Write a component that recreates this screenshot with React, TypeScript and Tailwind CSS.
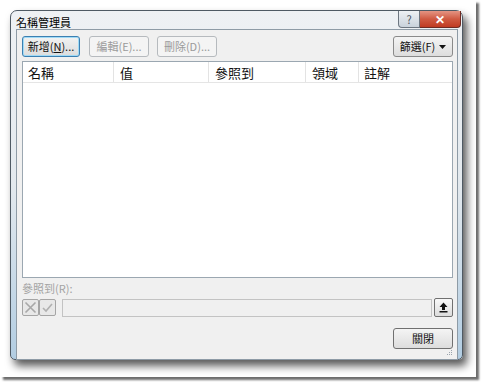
import React from "react";

const font = { fontFamily: '"Noto Sans CJK TC", "Noto Sans", sans-serif' };

function Btn({ children, w, disabled, focused }: { children: React.ReactNode; w: string; disabled?: boolean; focused?: boolean }) {
  let cls = "";
  if (disabled) cls = "border-[#b6babe] bg-[#f4f4f4] text-[#9a9a9a]";
  else if (focused) cls = "border-[#3c7fb1] bg-gradient-to-b from-[#f2f2f2] to-[#dcdcdc] text-[#111] shadow-[inset_0_0_0_1px_#9fdaf6]";
  else cls = "border-[#707070] bg-gradient-to-b from-[#f4f4f4] to-[#dddddd] text-[#111]";
  return (
    <div className={`${w} h-[21px] flex items-center justify-center rounded-[3px] border text-[11px] leading-none ${cls}`}>
      {children}
    </div>
  );
}

export default function App() {
  return (
    <div className="w-[484px] h-[382px] bg-white" style={font}>
      <div className="w-[476px] h-[377px] bg-white shadow-[3px_3px_2px_rgba(60,60,60,0.75)] pl-[10px] pt-[10px]">
        <div className="w-[453px] h-[350px] rounded-t-[7px] rounded-b-[5px] border border-[#4f5a64] bg-gradient-to-b from-[#eef1f4] via-[#e3e9ee] to-[#b2cde2] shadow-[4px_6px_8px_rgba(0,0,0,0.65)] flex flex-col">
          {/* title bar */}
          <div className="h-[22px] flex items-start justify-between pl-[5px] pr-[1px]">
            <div className="pt-[4px] text-[11px] leading-[14px] text-black">名稱管理員</div>
            <div className="flex">
              <div className="w-[22px] h-[17px] rounded-bl-[4px] border border-t-0 border-[#6d7680] bg-gradient-to-b from-[#eef1f4] to-[#c9d2db] flex items-center justify-center text-[11px] text-[#4a545e] leading-none">?</div>
              <div className="w-[41px] h-[17px] rounded-br-[4px] border border-l-0 border-t-0 border-[#6e2a22] bg-gradient-to-b from-[#e49483] via-[#cf5a42] to-[#c03a22] flex items-center justify-center text-white text-[12px] font-bold leading-none">✕</div>
            </div>
          </div>
          {/* client */}
          <div className="ml-[5px] mr-[4px] mb-[4px] flex-1 border border-[#8e9ba6] bg-[#f0f0f0] flex flex-col pl-[5px] pr-[4px] pt-[6px]">
            <div className="flex items-center">
              <Btn w="w-[58px]" focused>新增(<span className="underline">N</span>)...</Btn>
              <div className="w-[9px]" />
              <Btn w="w-[60px]" disabled>編輯(E)...</Btn>
              <div className="w-[8px]" />
              <Btn w="w-[60px]" disabled>刪除(D)...</Btn>
              <div className="flex-1" />
              <div className="w-[60px] h-[21px] flex items-center justify-center gap-[4px] rounded-[3px] border border-[#8a8a8a] bg-gradient-to-b from-[#f4f4f4] to-[#dddddd] text-[11px] text-[#111] leading-none">
                <span>篩選(F)</span>
                <svg width="7" height="4" viewBox="0 0 7 4"><path d="M0 0h7L3.5 4z" fill="#111" /></svg>
              </div>
            </div>
            <div className="mt-[4px] h-[217px] border border-[#9ba7b1] bg-white flex flex-col">
              <div className="h-[21px] flex border-b border-[#e5e5e5] text-[13px] leading-none text-[#111]">
                <div className="w-[91px] border-r border-[#e3e3e3] pl-[5px] flex items-center">名稱</div>
                <div className="w-[95px] border-r border-[#e3e3e3] pl-[6px] flex items-center">值</div>
                <div className="w-[97px] border-r border-[#e3e3e3] pl-[6px] flex items-center">參照到</div>
                <div className="w-[53px] border-r border-[#e3e3e3] pl-[6px] flex items-center">領域</div>
                <div className="flex-1 pl-[5px] flex items-center">註解</div>
              </div>
            </div>
            <div className="mt-[3px] text-[11px] leading-[14px] text-[#a3a3a3]">參照到(R):</div>
            <div className="mt-[3px] flex items-center">
              <div className="w-[17px] h-[17px] border border-[#a5a5a5] rounded-[2px] bg-[#e8e8e8] flex items-center justify-center">
                <svg width="13" height="13" viewBox="0 0 13 13"><path d="M1.5 1.5l10 10M11.5 1.5l-10 10" stroke="#a8a8a8" strokeWidth="1.6" /></svg>
              </div>
              <div className="w-[17px] h-[17px] border border-[#a5a5a5] rounded-[2px] bg-[#e8e8e8] flex items-center justify-center">
                <svg width="13" height="13" viewBox="0 0 13 13"><path d="M2 7l3 3 6-7" stroke="#b0b0b0" strokeWidth="1.6" fill="none" /></svg>
              </div>
              <div className="w-[6px]" />
              <div className="flex-1 h-[18px] border border-[#c3c3c3] bg-[#f0f0f0]" />
              <div className="w-[2px]" />
              <div className="w-[19px] h-[19px] border border-[#707070] rounded-[2px] bg-gradient-to-b from-[#f8f8f8] to-[#dcdcdc] flex items-center justify-center">
                <svg width="9" height="11" viewBox="0 0 9 11"><path d="M4.5 0.5L0.5 5H3v3h3V5h2.5z" fill="#111" /><rect x="0.5" y="9" width="8" height="1.5" fill="#111" /></svg>
              </div>
            </div>
            <div className="mt-[11px] flex justify-end">
              <Btn w="w-[60px]">關閉</Btn>
            </div>
            <div className="flex-1 flex items-end justify-end pb-[1px]">
              <svg width="9" height="9" viewBox="0 0 9 9"><g fill="#9aa4ad"><rect x="7" y="1" width="1" height="1"/><rect x="5" y="3" width="1" height="1"/><rect x="7" y="3" width="1" height="1"/><rect x="3" y="5" width="1" height="1"/><rect x="5" y="5" width="1" height="1"/><rect x="7" y="5" width="1" height="1"/></g></svg>
            </div>
          </div>
        </div>
      </div>
    </div>
  );
}
